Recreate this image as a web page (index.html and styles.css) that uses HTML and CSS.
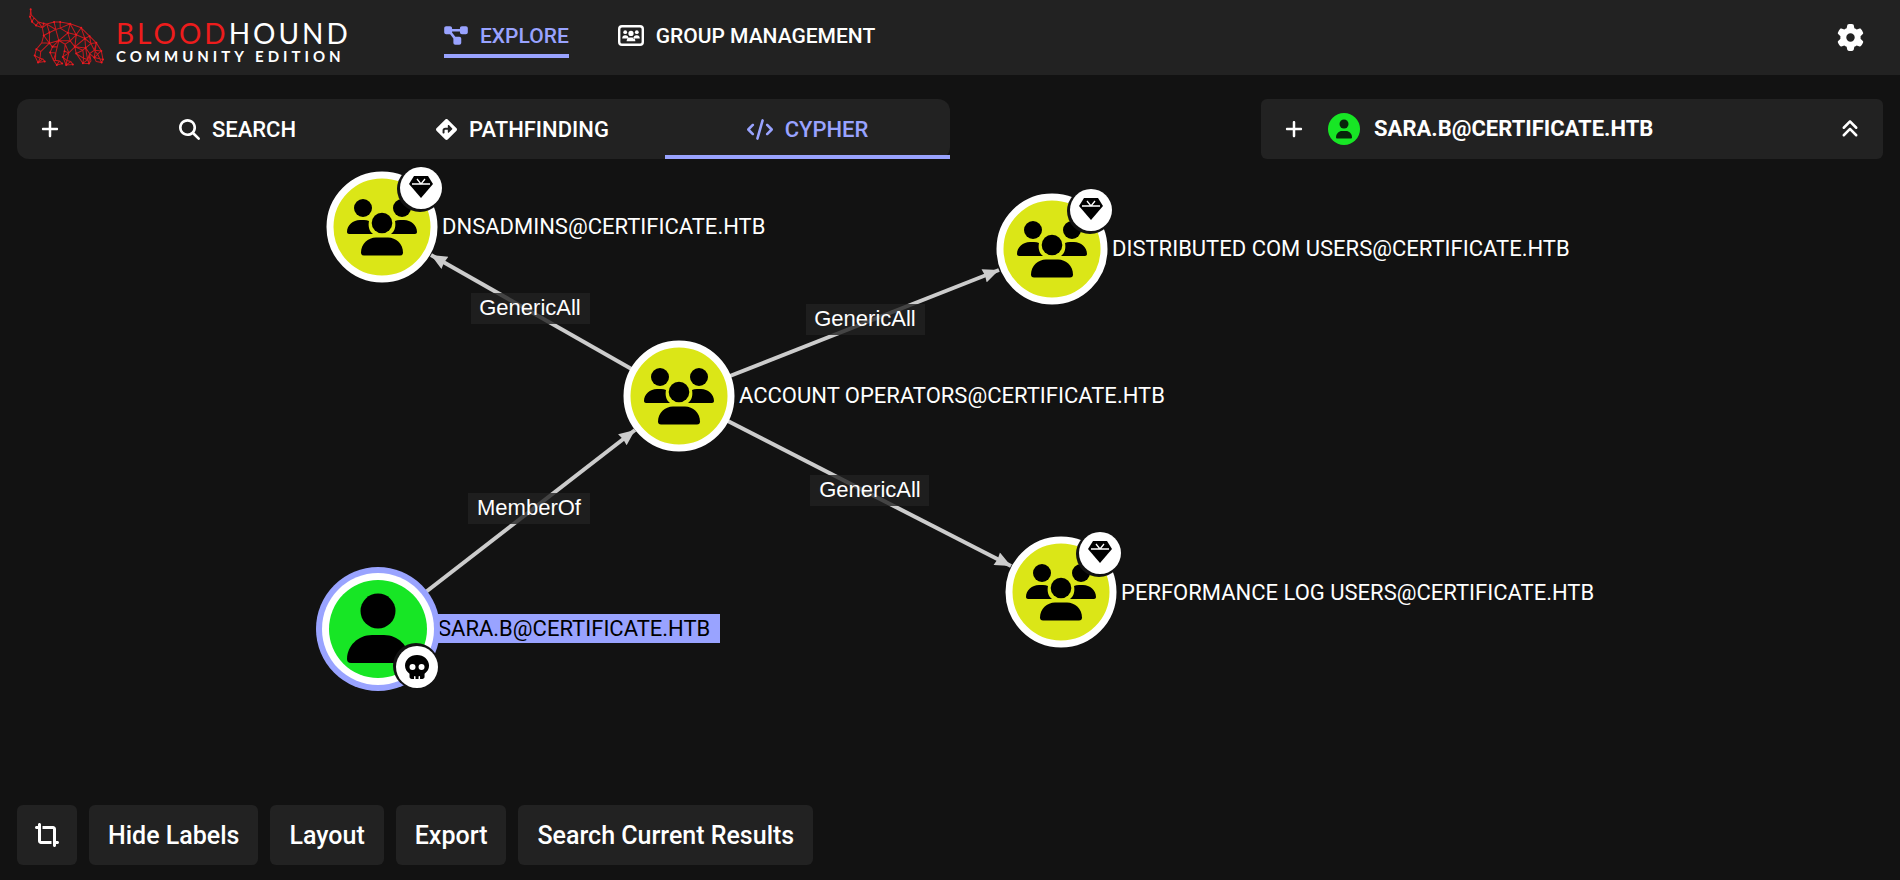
FILE: index.html
```html
<!DOCTYPE html>
<html lang="en">
<head>
<meta charset="utf-8">
<meta name="viewport" content="width=device-width, initial-scale=1">
<title>BloodHound</title>
<link rel="stylesheet" href="styles.css">
</head>
<body>
<header class="header">
  <a class="brand" href="#" aria-label="BloodHound Community Edition">
    <svg class="brand-dog" viewBox="24 24 230 176" aria-hidden="true">
      <path class="dog-lines" d="M32 28 30 50 36 65 48 76 67 83 71 70 55 66 42 53 34 45 32 28M36 65 42 53M48 76 55 66 67 83M71 70 80 72 102 66 120 66 150 71 183 83 208 108 228 128 243 152 248 178 244 187 228 184 222 172 232 162 243 152M80 72 67 83 71 106 88 97 80 72 107 88 102 66M107 88 120 84 120 66M120 84 150 71 143 98 120 84M150 71 168 104 183 83M143 98 168 104 194 115 183 83M88 97 107 88 116 121 88 129 88 97M71 106 88 129 116 121 143 98M116 121 150 122 143 98M150 122 168 104 164 140 150 122M164 140 194 115 208 108 212 130 194 115 196 143 164 140M196 143 212 130 228 128 222 150 212 130M196 143 208 160 222 150 243 152M208 160 222 172 228 128M222 150 232 162 244 187M222 172 248 178M71 106 65 128 49 147 44 166 54 187 74 184 68 176 60 174 62 154 88 129 65 128M49 147 62 154M44 166 60 174 54 187 68 176M88 129 97 140 90 157 100 180 110 194 126 190 118 182 106 180 107 158 116 121 97 140 112 140M90 157 107 158 100 180 118 182 110 194M116 121 135 132 133 153 128 170 138 194 158 193 152 184 140 181 146 158 164 140M135 132 150 122M135 132 146 158 133 153M128 170 146 158M128 170 140 181 138 194 152 184M164 140 168 160 188 189 206 190 202 178 190 174 188 150 164 140M168 160 188 150 196 143 202 178 208 160 206 190M168 160 190 174 188 189 202 178M208 160 212 182 206 190"/>
      <path class="dog-dots" d="M32 28h0M30 50h0M36 65h0M48 76h0M71 70h0M102 66h0M120 66h0M150 71h0M183 83h0M208 108h0M228 128h0M243 152h0M248 178h0M244 187h0M88 97h0M71 106h0M116 121h0M143 98h0M168 104h0M194 115h0M88 129h0M164 140h0M196 143h0M49 147h0M44 166h0M54 187h0M74 184h0M90 157h0M110 194h0M126 190h0M128 170h0M138 194h0M158 193h0M168 160h0M188 189h0M206 190h0M222 172h0M133 153h0M97 140h0"/>
    </svg>
    <span class="brand-text">
      <span class="brand-name"><span class="brand-red">BLOOD</span>HOUND</span>
      <span class="brand-edition">COMMUNITY EDITION</span>
    </span>
  </a>
  <nav class="nav">
    <a class="nav-link is-active" href="#">
      <svg class="icon-wide" viewBox="0 0 576 512" aria-hidden="true"><path d="M0 80C0 53.500 21.500 32 48 32h96c26.500 0 48 21.500 48 48V96H384V80c0-26.500 21.500-48 48-48h96c26.500 0 48 21.500 48 48v96c0 26.500-21.500 48-48 48H432c-26.500 0-48-21.500-48-48V160H192v16c0 1.700-.1 3.400-.3 5L272 288h96c26.500 0 48 21.500 48 48v96c0 26.500-21.500 48-48 48H272c-26.500 0-48-21.500-48-48V336c0-1.700 .1-3.400 .3-5L144 224H48c-26.500 0-48-21.500-48-48V80z"/></svg>
      EXPLORE
    </a>
    <a class="nav-link" href="#">
      <svg class="icon-group" viewBox="0 0 26 21" aria-hidden="true">
        <rect x="1.200" y="1.200" width="23.600" height="18.600" rx="2.800" fill="none" stroke="currentColor" stroke-width="2.400"/>
        <circle cx="7.200" cy="7.200" r="1.900"/><circle cx="18.800" cy="7.200" r="1.900"/><circle cx="13" cy="8.400" r="2.600"/>
        <path d="M4.200 13.400c0-2 1.200-3.200 3-3.200 1 0 1.900.3 2.500.9.300.9.700 1.600 1.300 2.300zM21.800 13.400c0-2-1.200-3.200-3-3.200-1 0-1.900.3-2.500.9-.3.900-.7 1.600-1.300 2.300zM8.600 16.200c0-2 1.400-3.600 3.400-3.600h2c2 0 3.400 1.600 3.400 3.600z"/>
      </svg>
      GROUP MANAGEMENT
    </a>
  </nav>
  <button class="icon-button settings" type="button" aria-label="Settings">
    <svg class="icon-gear" viewBox="0 0 512 512" aria-hidden="true"><path d="M495.900 166.600c3.200 8.700 .5 18.400-6.400 24.600l-43.300 39.400c1.100 8.300 1.700 16.800 1.700 25.400s-.6 17.100-1.700 25.400l43.300 39.400c6.900 6.200 9.600 15.900 6.400 24.600c-4.400 11.900-9.700 23.300-15.800 34.300l-4.700 8.100c-6.600 11-14 21.400-22.100 31.200c-5.900 7.200-15.700 9.600-24.500 6.800l-55.700-17.700c-13.400 10.300-28.200 18.900-44 25.400l-12.500 57.100c-2 9.100-9 16.300-18.200 17.800c-13.800 2.300-28 3.500-42.500 3.500s-28.700-1.200-42.500-3.500c-9.200-1.500-16.200-8.700-18.200-17.800l-12.500-57.100c-15.800-6.500-30.600-15.100-44-25.400L83.100 425.900c-8.800 2.800-18.600 .3-24.500-6.800c-8.100-9.800-15.500-20.200-22.100-31.200l-4.700-8.100c-6.100-11-11.400-22.400-15.800-34.300c-3.200-8.700-.5-18.400 6.400-24.600l43.300-39.400C64.600 273.100 64 264.600 64 256s.6-17.100 1.700-25.400L22.400 191.200c-6.900-6.200-9.600-15.900-6.400-24.600c4.400-11.900 9.700-23.300 15.800-34.300l4.700-8.100c6.600-11 14-21.400 22.100-31.200c5.900-7.200 15.700-9.600 24.500-6.800l55.700 17.700c13.400-10.300 28.200-18.900 44-25.400l12.500-57.100c2-9.100 9-16.300 18.200-17.800C227.300 1.200 241.500 0 256 0s28.700 1.200 42.500 3.500c9.200 1.500 16.200 8.700 18.200 17.800l12.500 57.100c15.800 6.500 30.600 15.100 44 25.400l55.700-17.700c8.800-2.800 18.600-.3 24.500 6.800c8.100 9.800 15.500 20.200 22.100 31.200l4.700 8.100c6.100 11 11.400 22.400 15.800 34.300zM256 336a80 80 0 1 0 0-160 80 80 0 1 0 0 160z"/></svg>
  </button>
</header>

<main class="explore">
  <svg class="graph" role="group" aria-label="Graph">
    <defs>
      <marker id="arrow" markerUnits="userSpaceOnUse" markerWidth="18" markerHeight="14" refX="17" refY="7" orient="auto"><path d="M1 0 17 7 1 14 2 7z" fill="#ccc"/></marker>
      <g id="gem">
        <circle cx="-1" cy="1" r="23" fill="#121212"/><circle r="21" fill="#fff"/>
        <path d="M-7-12H7L12-4 0 10-12-4z"/>
        <path d="M-9-4H9M-4-9 0-4 4-9" fill="none" stroke="#fff" stroke-width="1.300"/>
      </g>
      <g id="group-node">
        <circle r="52" fill="#dbe617" stroke="#fff" stroke-width="7"/>
        <circle cx="-19" cy="-19" r="9"/><circle cx="20" cy="-19" r="9"/>
        <path d="M-33 7C-34 7-35 6-35 5-35-2-29-7-22-7H-18Q-15-7-13-6C-14-1-13 4-9 7zM33 7C34 7 35 6 35 5 35-2 29-7 22-7H18Q15-7 13-6C14-1 13 4 9 7z"/>
        <circle cy="-4" r="10.300"/>
        <path d="M-18 28.500Q-21 28.500-21 25.500C-21 17-14 10.500-6 10.500H6C14 10.500 21 17 21 25.500Q21 28.500 18 28.500z"/>
      </g>
    </defs>
    <g transform="translate(0 -75)">
      <g class="edges">
        <path d="M679 396 431 255"/><path d="M679 396 999 270"/><path d="M679 396 1011 566"/><path d="M378 629 635 430"/>
      </g>
      <g class="edge-labels">
        <rect x="471" y="293" width="119" height="31"/><text x="530" y="315">GenericAll</text>
        <rect x="806" y="304" width="119" height="31"/><text x="865" y="326">GenericAll</text>
        <rect x="810" y="475" width="119" height="31"/><text x="870" y="497">GenericAll</text>
        <rect x="468" y="493" width="122" height="31"/><text x="529" y="515">MemberOf</text>
      </g>
      <g class="node-labels">
        <text x="442" y="234">DNSADMINS@CERTIFICATE.HTB</text>
        <text x="1112" y="256">DISTRIBUTED COM USERS@CERTIFICATE.HTB</text>
        <text x="739" y="403">ACCOUNT OPERATORS@CERTIFICATE.HTB</text>
        <text x="1121" y="600">PERFORMANCE LOG USERS@CERTIFICATE.HTB</text>
        <rect class="selected-bg" x="430" y="614" width="290" height="29"/>
        <text class="selected-text" x="438" y="636">SARA.B@CERTIFICATE.HTB</text>
      </g>
      <use href="#group-node" x="382" y="227"/><use href="#gem" x="421" y="188"/>
      <use href="#group-node" x="1052" y="249"/><use href="#gem" x="1091" y="210"/>
      <use href="#group-node" x="679" y="396"/>
      <use href="#group-node" x="1061" y="592"/><use href="#gem" x="1100" y="553"/>
      <g transform="translate(378 629)">
        <circle r="62" fill="#99a3ff"/><circle r="56" fill="#fff"/><circle r="49" fill="#17e625"/>
        <circle cy="-18" r="17.500"/>
        <path d="M-6 6C-20 6-31 17-31 30Q-31 34-27 34H27Q31 34 31 30C31 17 20 6 6 6z"/>
        <g transform="translate(39 38)">
          <circle cx="-1" cy="-1" r="23" fill="#121212"/><circle r="21" fill="#fff"/>
          <path transform="translate(-12 -12) scale(.047)" d="M416 398.900c58.500-41.100 96-104.100 96-174.900C512 100.300 397.400 0 256 0S0 100.300 0 224c0 70.700 37.500 133.800 96 174.900c0 .4 0 .7 0 1.100v64c0 26.500 21.500 48 48 48h48V464c0-8.800 7.200-16 16-16s16 7.200 16 16v48h64V464c0-8.800 7.200-16 16-16s16 7.200 16 16v48h48c26.500 0 48-21.500 48-48V400c0-.4 0-.7 0-1.100zM96 256a64 64 0 1 1 128 0A64 64 0 1 1 96 256zm256-64a64 64 0 1 1 0 128 64 64 0 1 1 0-128z"/>
        </g>
      </g>
    </g>
  </svg>

  <div class="panels">
    <section class="search-panel">
      <button class="icon-button expand" type="button" aria-label="Expand search">
        <svg class="icon-small" viewBox="0 0 448 512" aria-hidden="true"><path d="M256 80c0-17.700-14.300-32-32-32s-32 14.300-32 32V224H48c-17.700 0-32 14.300-32 32s14.300 32 32 32H192V432c0 17.700 14.300 32 32 32s32-14.300 32-32V288H400c17.700 0 32-14.300 32-32s-14.300-32-32-32H256V80z"/></svg>
      </button>
      <div class="tabs" role="tablist">
        <button class="tab" type="button" role="tab" aria-selected="false">
          <svg class="icon" viewBox="0 0 512 512" aria-hidden="true"><path d="M416 208c0 45.900-14.900 88.300-40 122.700L502.600 457.400c12.500 12.500 12.500 32.800 0 45.300s-32.800 12.500-45.300 0L330.700 376c-34.400 25.200-76.800 40-122.700 40C93.100 416 0 322.900 0 208S93.100 0 208 0S416 93.100 416 208zM208 352a144 144 0 1 0 0-288 144 144 0 1 0 0 288z"/></svg>
          SEARCH
        </button>
        <button class="tab" type="button" role="tab" aria-selected="false">
          <svg class="icon" viewBox="0 0 512 512" aria-hidden="true"><path d="M227.700 11.700c15.600-15.600 40.900-15.600 56.600 0l216 216c15.600 15.600 15.600 40.900 0 56.600l-216 216c-15.600 15.600-40.900 15.600-56.600 0l-216-216c-15.600-15.600-15.600-40.900 0-56.600l216-216zm87.600 137c-4.600-4.600-11.500-5.900-17.400-3.500s-9.900 8.300-9.900 14.800v56H224c-35.300 0-64 28.700-64 64v48c0 13.300 10.700 24 24 24s24-10.700 24-24V280c0-8.800 7.200-16 16-16h64v56c0 6.500 3.900 12.300 9.900 14.800s12.900 1.100 17.400-3.500l80-80c6.200-6.200 6.200-16.400 0-22.600l-80-80z"/></svg>
          PATHFINDING
        </button>
        <button class="tab is-active" type="button" role="tab" aria-selected="true">
          <svg class="icon-code" viewBox="0 0 640 512" aria-hidden="true"><path d="M392.800 1.200c-17-4.900-34.700 5-39.600 22l-128 448c-4.900 17 5 34.700 22 39.600s34.700-5 39.600-22l128-448c4.900-17-5-34.700-22-39.600zm80.600 120.100c-12.500 12.500-12.500 32.800 0 45.300L562.700 256l-89.400 89.400c-12.500 12.500-12.500 32.800 0 45.300s32.800 12.500 45.300 0l112-112c12.500-12.500 12.500-32.800 0-45.300l-112-112c-12.500-12.500-32.800-12.500-45.300 0zm-306.700 0c-12.500-12.500-32.800-12.500-45.300 0l-112 112c-12.500 12.500-12.500 32.800 0 45.300l112 112c12.500 12.500 32.800 12.500 45.300 0s12.500-32.800 0-45.300L77.300 256l89.400-89.400c12.500-12.500 12.500-32.800 0-45.300z"/></svg>
          CYPHER
        </button>
      </div>
    </section>

    <section class="info-panel">
      <button class="icon-button" type="button" aria-label="Expand details">
        <svg class="icon-small" viewBox="0 0 448 512" aria-hidden="true"><path d="M256 80c0-17.700-14.300-32-32-32s-32 14.300-32 32V224H48c-17.700 0-32 14.300-32 32s14.300 32 32 32H192V432c0 17.700 14.300 32 32 32s32-14.300 32-32V288H400c17.700 0 32-14.300 32-32s-14.300-32-32-32H256V80z"/></svg>
      </button>
      <svg class="avatar" viewBox="-16 -16 32 32" aria-hidden="true">
        <circle r="16" fill="#17e625"/><circle cy="-5" r="4.500" fill="#08240b"/>
        <path fill="#08240b" d="M-2 2C-5 2-8 4.500-8 8.500Q-8 9.500-7 9.500H7Q8 9.500 8 8.500C8 4.500 5 2 2 2z"/>
      </svg>
      <h2 class="info-title">SARA.B@CERTIFICATE.HTB</h2>
      <button class="icon-button" type="button" aria-label="Collapse all">
        <svg class="icon-small" viewBox="0 0 448 512" aria-hidden="true"><path d="M246.600 41.400c-12.500-12.500-32.800-12.500-45.300 0l-160 160c-12.500 12.500-12.500 32.800 0 45.300s32.800 12.500 45.300 0L224 109.300 361.400 246.600c12.500 12.500 32.800 12.500 45.300 0s12.500-32.800 0-45.300l-160-160zm160 352l-160-160c-12.500-12.500-32.800-12.500-45.300 0l-160 160c-12.500 12.500-12.500 32.800 0 45.300s32.800 12.500 45.300 0L224 301.300 361.400 438.600c12.500 12.500 32.800 12.500 45.300 0s12.500-32.800 0-45.300z"/></svg>
      </button>
    </section>
  </div>

  <div class="controls">
    <button class="control control-icon" type="button" aria-label="Fit to screen">
      <svg class="icon-crop" viewBox="0 0 512 512" aria-hidden="true"><path d="M128 32c0-17.700-14.300-32-32-32S64 14.300 64 32V64H32C14.300 64 0 78.300 0 96s14.300 32 32 32H64V384c0 35.300 28.700 64 64 64H352V384H128V32zM384 480c0 17.700 14.300 32 32 32s32-14.300 32-32V448h32c17.700 0 32-14.300 32-32s-14.300-32-32-32H448l0-256c0-35.300-28.700-64-64-64L160 64v64l224 0 0 352z"/></svg>
    </button>
    <button class="control" type="button">Hide Labels</button>
    <button class="control" type="button">Layout</button>
    <button class="control" type="button">Export</button>
    <button class="control" type="button">Search Current Results</button>
  </div>
</main>
</body>
</html>
```
FILE: styles.css
```css
* { box-sizing: border-box; }

body {
  margin: 0;
  min-height: 100vh;
  display: flex;
  flex-direction: column;
  background: #121212;
  color: #fff;
  font-family: Roboto, "Liberation Sans", sans-serif;
}

button {
  border: 0;
  background: none;
  color: inherit;
  font: inherit;
  cursor: pointer;
}

a { color: inherit; text-decoration: none; }
svg { display: block; flex: none; fill: currentColor; }

.header {
  display: flex;
  align-items: center;
  height: 75px;
  padding: 0 28px;
  background: #222;
}

.brand { display: flex; align-items: center; gap: 11px; width: 416px; }
.brand-dog { width: 77px; height: 59px; }
.dog-lines { fill: none; stroke: #c81a1e; stroke-width: 3; stroke-linejoin: round; }
.dog-dots { fill: none; stroke: #ed1c24; stroke-width: 6; stroke-linecap: round; }
.brand-text { display: flex; flex-direction: column; padding-top: 8px; font-family: Lato, sans-serif; }
.brand-name { font-size: 28px; line-height: 28px; letter-spacing: 3px; }
.brand-red { color: #ed1c1c; }
.brand-edition { font-size: 15px; line-height: 18px; font-weight: 700; letter-spacing: 4px; }

.nav { display: flex; gap: 49px; margin-right: auto; }
.nav-link {
  display: flex;
  align-items: center;
  gap: 12px;
  height: 41px;
  border-bottom: 4px solid transparent;
  font-size: 21px;
  font-weight: 500;
}
.nav-link.is-active { color: #99a3ff; border-color: #99a3ff; }

.icon { width: 21px; height: 21px; }
.icon-small { width: 18px; height: 20px; }
.icon-wide { width: 24px; height: 21px; }
.icon-code { width: 26px; height: 21px; }
.icon-group { width: 26px; height: 21px; }
.icon-gear { width: 27px; height: 27px; }
.icon-crop { width: 24px; height: 24px; }

.icon-button {
  display: flex;
  align-items: center;
  justify-content: center;
  width: 44px;
  height: 44px;
  padding: 0;
}

.explore {
  position: relative;
  flex: 1;
  display: flex;
  flex-direction: column;
  justify-content: space-between;
  padding: 24px 17px 15px;
}

.graph { position: absolute; inset: 0; width: 100%; height: 100%; fill: #000; }
.edges { fill: none; stroke: #ccc; stroke-width: 4; }
.edges path { marker-end: url(#arrow); }
.edge-labels { font: 22px "Liberation Sans", Arial, sans-serif; text-anchor: middle; fill: #fff; }
.edge-labels rect { fill: #222; fill-opacity: .8; }
.node-labels { font-size: 22px; fill: #fff; }
.node-labels .selected-bg { fill: #99a3ff; }
.node-labels .selected-text { fill: #000; }

.panels { position: relative; display: flex; justify-content: space-between; gap: 24px; }

.search-panel {
  display: flex;
  align-items: center;
  width: 50%;
  height: 60px;
  padding-left: 11px;
  border-radius: 12px;
  background: #222;
}
.expand { margin-right: 23px; }
.tabs { flex: 1; display: flex; align-self: stretch; }
.tab {
  flex: 1;
  display: flex;
  align-items: center;
  justify-content: center;
  gap: 12px;
  padding: 4px 0 0;
  border-bottom: 4px solid transparent;
  font-size: 22px;
  font-weight: 500;
}
.tab.is-active { color: #99a3ff; border-color: #99a3ff; }

.info-panel {
  display: flex;
  align-items: center;
  width: 33.33%;
  height: 60px;
  padding: 0 11px;
  border-radius: 6px;
  background: #222;
}
.avatar { width: 32px; height: 32px; margin: 0 14px 0 12px; }
.info-title { flex: 1; margin: 0; font-size: 22px; line-height: 28px; font-weight: 700; }

.controls { position: relative; display: flex; flex-wrap: wrap; gap: 12px; }
.control {
  height: 60px;
  padding: 0 19px;
  border-radius: 6px;
  background: #222;
  font-size: 25px;
  font-weight: 500;
}
.control-icon { padding: 0 18px; }
```
